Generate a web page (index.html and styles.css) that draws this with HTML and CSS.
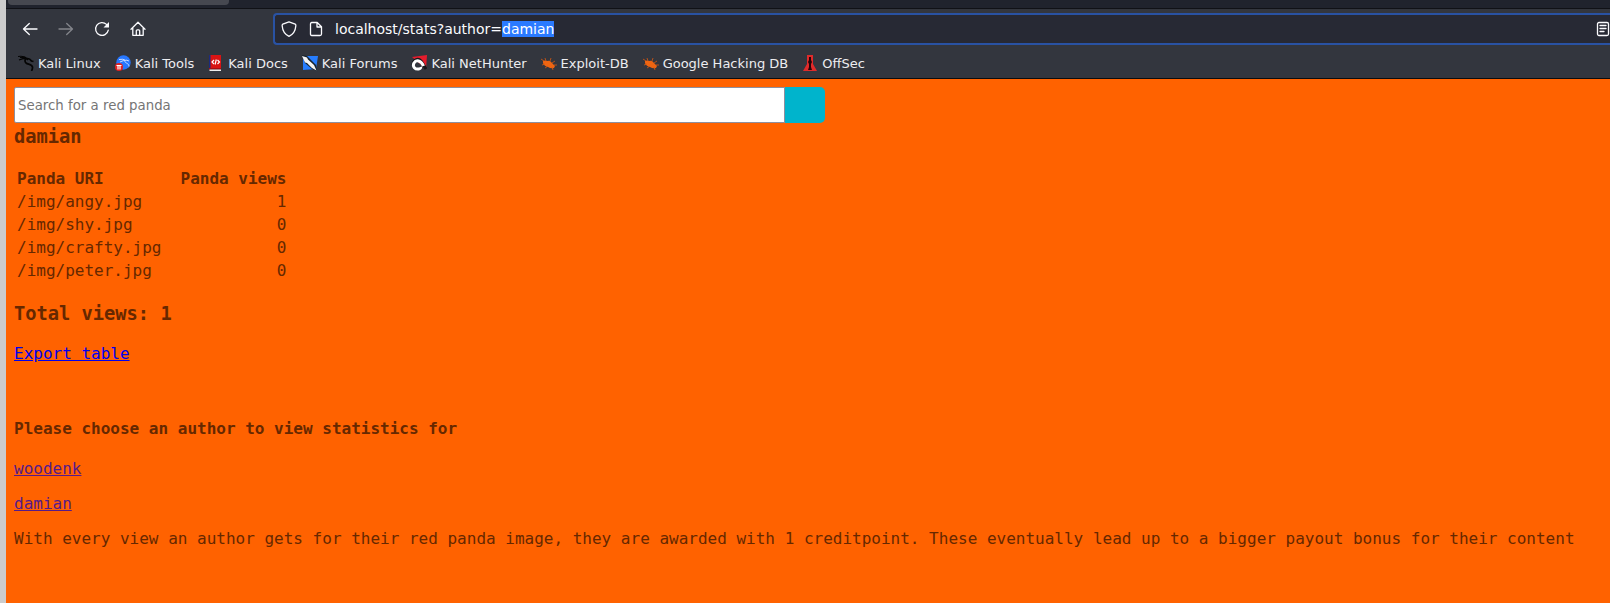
FILE: index.html
```
<!DOCTYPE html>
<html lang="en">
<head>
<meta charset="utf-8">
<title>Red Panda Search | Stats</title>
<link rel="stylesheet" href="styles.css">
</head>
<body>
<header class="browser">
  <div class="tabs"><div class="tab"></div></div>
  <nav class="toolbar" aria-label="Navigation">
    <button class="tool" aria-label="Back"><svg viewBox="0 0 16 16"><path d="M15 8H1.500M7.300 2.500 1.500 8l5.800 5.500"/></svg></button>
    <button class="tool" aria-label="Forward" disabled><svg viewBox="0 0 16 16"><path d="M1 8h13.500M8.700 2.500l5.800 5.500-5.800 5.500"/></svg></button>
    <button class="tool" aria-label="Reload"><svg viewBox="0 0 16 16"><path d="M14.300 9.200A6.400 6.400 0 1 1 12.500 3.400L14 5"/><path class="solid" d="M15 1v5.500H9.500z"/></svg></button>
    <button class="tool" aria-label="Home"><svg viewBox="0 0 16 16"><path d="M1 8.300 8 1.200l7 7.100M2.800 7v7.300h10.400V7M6.300 14V9.800q0-1 1-1h1.400q1 0 1 1V14"/></svg></button>
    <div class="address">
      <svg class="icon" viewBox="0 0 16 16"><path d="M8 .8 14.200 3.200Q15 3.600 14.800 5C14.400 10 12 13.500 8 15.300 4 13.500 1.600 10 1.200 5 1 3.600 1.800 3.200 1.800 3.200z"/></svg>
      <svg class="icon" viewBox="0 0 16 16"><path d="M3.800 1.500h5.400l4.300 4.300v7.200q0 1.500-1.500 1.500H3.800q-1.300 0-1.300-1.500V3q0-1.500 1.300-1.500zM9 1.500V6h4.500"/></svg>
      <div class="url" role="textbox" aria-label="Address" contenteditable="true" spellcheck="false">localhost/stats?author=<mark class="selected">damian</mark></div>
      <svg class="icon" viewBox="0 0 16 16"><rect x="3.500" y="1.500" width="11" height="13" rx="1.500"/><path d="M6 4.500h6M6 7.500h6M6 10.500h4"/></svg>
    </div>
  </nav>
  <nav class="bookmarks" aria-label="Bookmarks">
    <a class="bookmark" href="#"><svg viewBox="0 0 16 16"><path fill="none" stroke="#050505" stroke-width="1.200" d="M0 1.500Q6 .5 9 3.500M1 5q4-2 8-1.500M2 2.500q5-.5 8 2.500"/><path fill="none" stroke="#050505" stroke-width="1.700" d="M8 3q-2 3 0 5c2 1.500 6 1 6.500 4q.2 2-1 4M9 3.500q3 0 4.500 2.500l2 .5"/></svg>Kali Linux</a>
    <a class="bookmark" href="#"><svg viewBox="0 0 16 16"><circle cx="8.500" cy="7.500" r="7.200" fill="#2777ff"/><path fill="none" stroke="#c8dcff" stroke-width="1" d="M4 4.500q4-1 7 1M5 7q4-2 5-1.500c-1 3 4 2 4 6M11 5l3 1"/><circle cx="4" cy="12" r="4" fill="#e02020"/><path fill="none" stroke="#fff" stroke-width="1.200" d="M1.500 10.500h5M3 10.500v4M5 10.500v4"/></svg>Kali Tools</a>
    <a class="bookmark" href="#"><svg viewBox="0 0 16 16"><path fill="#1b2b80" d="M1 0h3v13H1z"/><path fill="#d91414" d="M2.500 0H13v14H2.500z"/><path fill="#a60d15" d="M1 13h12v1.500H1z"/><path fill="#eee" d="M1.500 14.500H13V16H1.500z"/><path fill="none" stroke="#fff" stroke-width="1.200" d="M6 5 4 7l2 2M9.500 5l2 2-2 2M8.300 4.500l-1.200 5"/></svg>Kali Docs</a>
    <a class="bookmark" href="#"><svg viewBox="0 0 16 16"><path fill="#267dff" d="M1 1h15l-2 13-13 1z"/><path fill="#17232d" d="m0 0 5 1 9 9 1 6-5-2-7-6z"/><path fill="#f4f4f4" d="m0 1 5 1.500 1 2 6 5.500 2.500 5.500-4.500-2.500-5-5-2-.5z"/></svg>Kali Forums</a>
    <a class="bookmark" href="#"><svg viewBox="0 0 16 16"><path fill="#e51c2c" d="m1 2 15-2-1 14z"/><path fill="none" stroke="#15171a" stroke-width="3" d="M2 10C2 5 7 2.500 10 6l5 8"/><path fill="none" stroke="#fff" stroke-width="3" d="M12.500 11C10 5 5 4.500 3 8c-2 4 1.500 6.500 4.500 6q2.500-.5 2-2"/></svg>Kali NetHunter</a>
    <a class="bookmark" href="#"><svg viewBox="0 0 16 16"><use href="#bug"/></svg>Exploit-DB</a>
    <a class="bookmark" href="#"><svg viewBox="0 0 16 16"><g id="bug"><path fill="#ee6512" d="M2 6q2-1 4 0 3-1 5 2l3 3-1 2q-3 1-6-1-4-1-5-4z"/><path fill="none" stroke="#d9580f" stroke-width=".8" d="M3 6 0 4M5 6 4 3M9 6l1-3M11 8l3-2M13 10h3M4 9l-3 1M7 11l-3 2M11 12l1 3"/></g></svg>Google Hacking DB</a>
    <a class="bookmark" href="#"><svg viewBox="0 0 16 16"><path fill="#e02a2a" d="M5 0h6v9l4 7H1l4-7z"/><path fill="#250508" d="M7 2h2v3l1 2-1 2v3l1 3H6l1-3V9L6 7l1-2z"/></svg>OffSec</a>
  </nav>
</header>
<main class="page">
  <form class="search">
    <input class="search-text" type="text" placeholder="Search for a red panda" aria-label="Search for a red panda">
    <button class="search-button" type="submit" aria-label="Search"></button>
  </form>
  <h3 class="author">damian</h3>
  <table class="stats">
    <thead><tr><th>Panda URI</th><th>Panda views</th></tr></thead>
    <tbody>
      <tr><td>/img/angy.jpg</td><td>1</td></tr>
      <tr><td>/img/shy.jpg</td><td>0</td></tr>
      <tr><td>/img/crafty.jpg</td><td>0</td></tr>
      <tr><td>/img/peter.jpg</td><td>0</td></tr>
    </tbody>
  </table>
  <h3>Total views: 1</h3>
  <p class="export"><a class="link" href="#export">Export table</a></p>
  <h4>Please choose an author to view statistics for</h4>
  <p><a class="link visited" href="#woodenk">woodenk</a></p>
  <p><a class="link visited" href="#damian">damian</a></p>
  <p>With every view an author gets for their red panda image, they are awarded with 1 creditpoint. These eventually lead up to a bigger payout bonus for their content</p>
</main>
</body>
</html>
```
FILE: styles.css
```
* { box-sizing: border-box; }
body {
  margin: 0;
  min-height: 100vh;
  display: flex;
  flex-direction: column;
  border-left: 6px solid #cccccc;
  background: #ff6200;
}
.browser {
  background: #33363e;
  border-bottom: 1px solid #0c0c0d;
  font-family: "DejaVu Sans", sans-serif;
  font-size: 14px;
  color: #fbfbfe;
}
.tabs {
  height: 9px;
  padding-left: 2px;
  background: #20232d;
  border-bottom: 1px solid #101116;
}
.tab {
  width: 221px;
  height: 5px;
  background: #464850;
  border-radius: 0 0 4px 4px;
}
.toolbar {
  display: flex;
  align-items: center;
  height: 40px;
  padding-left: 6px;
}
.tool {
  flex: none;
  display: grid;
  place-items: center;
  width: 36px;
  height: 32px;
  padding: 0;
  border: 0;
  background: none;
  color: #fbfbfe;
}
.tool:disabled { opacity: 0.4; }
.tool svg, .icon {
  flex: none;
  width: 16px;
  height: 16px;
  fill: none;
  stroke: currentColor;
  stroke-width: 1.3;
  stroke-linejoin: round;
  stroke-linecap: round;
}
.solid { fill: currentColor; stroke: none; }
.address {
  flex: 1;
  display: flex;
  align-items: center;
  gap: 11px;
  height: 32px;
  margin-left: 117px;
  padding-left: 6px;
  border: 2px solid #2952a3;
  border-right: 0;
  border-radius: 4px 0 0 4px;
  background: #272934;
}
.url {
  flex: 1;
  white-space: nowrap;
  outline: 0;
}
.selected { background: #2a7aff; color: #fff; }
.bookmarks {
  display: flex;
  align-items: center;
  gap: 14px;
  height: 29px;
  padding: 0 0 1px 12px;
  font-size: 13px;
  white-space: nowrap;
}
.bookmark {
  display: flex;
  align-items: center;
  gap: 4px;
  color: #ededf0;
  text-decoration: none;
}
.bookmark svg { width: 16px; height: 16px; }
.page {
  padding: 8px;
  color: #662800;
  font: 16px/19px "DejaVu Sans Mono", monospace;
}
.search {
  display: flex;
  max-width: 811px;
  padding-bottom: 3px;
}
.search-text {
  flex: 1;
  min-width: 0;
  height: 36px;
  padding: 0 3px;
  border: 1px solid #8f8f9d;
  border-radius: 2px 0 0 2px;
  background: #fff;
  font-family: "DejaVu Sans", sans-serif;
}
.search-text::placeholder { color: #757575; }
.search-button {
  width: 40px;
  height: 36px;
  border: 0;
  border-radius: 0 5px 5px 0;
  background: #00b4cc;
}
h3 { line-height: 22px; }
.author { margin: 0 0 18px; }
.stats { margin-bottom: 20px; }
.stats th { text-align: left; }
.stats th:first-child, .stats td:first-child { padding-right: 16px; }
.stats td:last-child { text-align: right; }
.export { margin-bottom: 56px; }
.link { color: #0000ee; }
.visited { color: #551a8b; }
```
